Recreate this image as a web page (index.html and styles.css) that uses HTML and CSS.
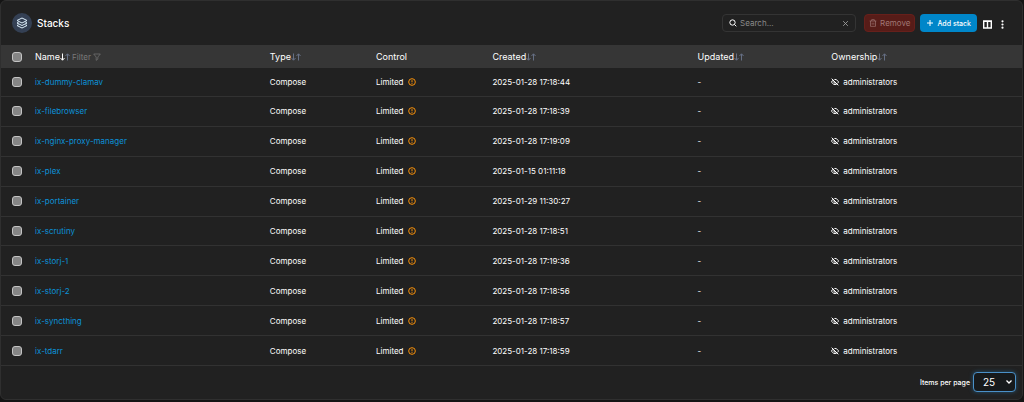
FILE: index.html
```html
<!DOCTYPE html>
<html lang="en">
<head>
  <meta charset="UTF-8" />
  <meta name="viewport" content="width=device-width, initial-scale=1.0" />
  <title>Stacks</title>
  <link rel="stylesheet" href="styles.css">
</head>
<body>
  <svg class="sprite" aria-hidden="true">
    <symbol id="sort" viewBox="0 0 20 16">
      <path class="down" d="M5 1v13M1 10l4 4.500L9 10" />
      <path d="M15 15V2M11 6l4-4.500L19 6" />
    </symbol>
    <symbol id="info" viewBox="0 0 24 24">
      <circle cx="12" cy="12" r="10" />
      <path d="M12 6.500v6.500M12 15.500v2.500" />
    </symbol>
    <symbol id="eye-off" viewBox="0 0 24 24">
      <path d="M9.900 4.500A10 10 0 0 1 12 4.300c6 0 9.500 5.500 10.500 7.700a16 16 0 0 1-3 4.200M6.500 6.300A15 15 0 0 0 1.500 12c1 2.200 4.500 7.700 10.500 7.700 2 0 3.800-.6 5.300-1.600M9.500 9.500a3.500 3.500 0 0 0 5 5M2 2l20 20" />
    </symbol>
  </svg>

  <main class="card">
    <header class="toolbar">
      <span class="badge">
        <svg viewBox="0 0 24 24"><path d="M12 2L2 7l10 5 10-5zM5 10.500L2 12l10 5 10-5-3-1.500M5 15.500L2 17l10 5 10-5-3-1.500" /></svg>
      </span>
      <h1>Stacks</h1>
      <div class="search">
        <svg viewBox="0 0 24 24"><circle cx="10.500" cy="10.500" r="8" /><path d="M16.500 16.500L22 22" /></svg>
        <input type="text" placeholder="Search..." aria-label="Search">
        <button type="button" class="clear" aria-label="Clear search">
          <svg viewBox="0 0 24 24"><path d="M4 4l16 16M20 4L4 20" /></svg>
        </button>
      </div>
      <button type="button" class="btn remove" disabled>
        <svg viewBox="0 0 24 24"><path d="M2 6h20M8 6V2h8v4M4.500 6v16h15V6M9.500 11v6M14.500 11v6" /></svg>
        Remove
      </button>
      <button type="button" class="btn add">
        <svg viewBox="0 0 24 24"><path d="M12 3v18M3 12h18" /></svg>
        Add stack
      </button>
      <button type="button" class="tool" aria-label="Columns">
        <svg viewBox="0 0 9 9"><path d="M.7 1h7.600v7H.7zM4.500 1v7M.7 1.200h7.600" /></svg>
      </button>
      <button type="button" class="tool dots" aria-label="Table settings">
        <svg viewBox="0 0 9 9"><circle cx="4.500" cy="1.300" r="1.100" /><circle cx="4.500" cy="4.500" r="1.100" /><circle cx="4.500" cy="7.700" r="1.100" /></svg>
      </button>
    </header>

    <table>
      <colgroup>
        <col class="col-check"><col class="col-name"><col class="col-type"><col class="col-control"><col class="col-created"><col class="col-updated"><col>
      </colgroup>
      <thead>
        <tr>
          <th><input type="checkbox" aria-label="Select all"></th>
          <th>Name<svg class="sort asc"><use href="#sort" /></svg><button type="button" class="filter">Filter <svg viewBox="0 0 24 24"><path d="M2 3h20l-7.500 9v6.500L9.500 22V12z" /></svg></button></th>
          <th>Type<svg class="sort"><use href="#sort" /></svg></th>
          <th>Control</th>
          <th>Created<svg class="sort"><use href="#sort" /></svg></th>
          <th>Updated<svg class="sort"><use href="#sort" /></svg></th>
          <th>Ownership<svg class="sort"><use href="#sort" /></svg></th>
        </tr>
      </thead>
      <tbody>
        <tr>
          <td><input type="checkbox" aria-label="Select ix-dummy-clamav"></td>
          <td><a href="#">ix-dummy-clamav</a></td>
          <td>Compose</td>
          <td>Limited <svg class="info"><use href="#info" /></svg></td>
          <td>2025-01-28 17:18:44</td>
          <td>-</td>
          <td><svg class="eye"><use href="#eye-off" /></svg>administrators</td>
        </tr>
        <tr>
          <td><input type="checkbox" aria-label="Select ix-filebrowser"></td>
          <td><a href="#">ix-filebrowser</a></td>
          <td>Compose</td>
          <td>Limited <svg class="info"><use href="#info" /></svg></td>
          <td>2025-01-28 17:18:39</td>
          <td>-</td>
          <td><svg class="eye"><use href="#eye-off" /></svg>administrators</td>
        </tr>
        <tr>
          <td><input type="checkbox" aria-label="Select ix-nginx-proxy-manager"></td>
          <td><a href="#">ix-nginx-proxy-manager</a></td>
          <td>Compose</td>
          <td>Limited <svg class="info"><use href="#info" /></svg></td>
          <td>2025-01-28 17:19:09</td>
          <td>-</td>
          <td><svg class="eye"><use href="#eye-off" /></svg>administrators</td>
        </tr>
        <tr>
          <td><input type="checkbox" aria-label="Select ix-plex"></td>
          <td><a href="#">ix-plex</a></td>
          <td>Compose</td>
          <td>Limited <svg class="info"><use href="#info" /></svg></td>
          <td>2025-01-15 01:11:18</td>
          <td>-</td>
          <td><svg class="eye"><use href="#eye-off" /></svg>administrators</td>
        </tr>
        <tr>
          <td><input type="checkbox" aria-label="Select ix-portainer"></td>
          <td><a href="#">ix-portainer</a></td>
          <td>Compose</td>
          <td>Limited <svg class="info"><use href="#info" /></svg></td>
          <td>2025-01-29 11:30:27</td>
          <td>-</td>
          <td><svg class="eye"><use href="#eye-off" /></svg>administrators</td>
        </tr>
        <tr>
          <td><input type="checkbox" aria-label="Select ix-scrutiny"></td>
          <td><a href="#">ix-scrutiny</a></td>
          <td>Compose</td>
          <td>Limited <svg class="info"><use href="#info" /></svg></td>
          <td>2025-01-28 17:18:51</td>
          <td>-</td>
          <td><svg class="eye"><use href="#eye-off" /></svg>administrators</td>
        </tr>
        <tr>
          <td><input type="checkbox" aria-label="Select ix-storj-1"></td>
          <td><a href="#">ix-storj-1</a></td>
          <td>Compose</td>
          <td>Limited <svg class="info"><use href="#info" /></svg></td>
          <td>2025-01-28 17:19:36</td>
          <td>-</td>
          <td><svg class="eye"><use href="#eye-off" /></svg>administrators</td>
        </tr>
        <tr>
          <td><input type="checkbox" aria-label="Select ix-storj-2"></td>
          <td><a href="#">ix-storj-2</a></td>
          <td>Compose</td>
          <td>Limited <svg class="info"><use href="#info" /></svg></td>
          <td>2025-01-28 17:18:56</td>
          <td>-</td>
          <td><svg class="eye"><use href="#eye-off" /></svg>administrators</td>
        </tr>
        <tr>
          <td><input type="checkbox" aria-label="Select ix-syncthing"></td>
          <td><a href="#">ix-syncthing</a></td>
          <td>Compose</td>
          <td>Limited <svg class="info"><use href="#info" /></svg></td>
          <td>2025-01-28 17:18:57</td>
          <td>-</td>
          <td><svg class="eye"><use href="#eye-off" /></svg>administrators</td>
        </tr>
        <tr>
          <td><input type="checkbox" aria-label="Select ix-tdarr"></td>
          <td><a href="#">ix-tdarr</a></td>
          <td>Compose</td>
          <td>Limited <svg class="info"><use href="#info" /></svg></td>
          <td>2025-01-28 17:18:59</td>
          <td>-</td>
          <td><svg class="eye"><use href="#eye-off" /></svg>administrators</td>
        </tr>
      </tbody>
    </table>

    <footer class="pager">
      <label for="page-size">Items per page</label>
      <select id="page-size">
        <option>10</option>
        <option selected>25</option>
        <option>50</option>
        <option>100</option>
      </select>
    </footer>
  </main>
</body>
</html>
```
FILE: styles.css
```css
* {
  box-sizing: border-box;
}
body {
  margin: 0;
  background: #141414;
  color: #fff;
  font-family: Inter, sans-serif;
  font-size: 8px;
}
svg {
  fill: none;
  stroke: currentColor;
  stroke-width: 2;
  flex-shrink: 0;
}
.sprite {
  display: none;
}
button, input, select {
  font: inherit;
  color: inherit;
}
button {
  padding: 0;
  border: 0;
  background: none;
  cursor: pointer;
}
.card {
  margin-right: 1px;
  background: #212121;
  border: 1px solid #2f2f2f;
  border-radius: 6px;
}
.toolbar {
  display: flex;
  align-items: center;
  height: 44px;
  padding: 0 15px 0 11px;
}
.badge {
  display: flex;
  align-items: center;
  justify-content: center;
  width: 20px;
  height: 20px;
  border-radius: 50%;
  background: #344054;
  color: #e0f2fe;
}
.badge svg {
  width: 12px;
  height: 12px;
}
h1 {
  margin: 0 auto 0 5px;
  font-size: 10px;
  font-weight: 500;
}
.search {
  display: flex;
  align-items: center;
  width: 134px;
  height: 18px;
  padding: 0 6px;
  border: 1px solid #343434;
  border-radius: 4px;
}
.search svg {
  width: 8px;
  height: 8px;
  stroke-width: 3;
}
.search input {
  flex: 1;
  min-width: 0;
  padding: 0 3px;
  border: 0;
  outline: 0;
  background: none;
  font-size: 8px;
}
.search input::placeholder {
  color: #8a8a8a;
}
.search .clear {
  display: flex;
  color: #a0a0a0;
}
.search .clear svg {
  width: 7px;
  height: 7px;
}
.btn {
  display: flex;
  align-items: center;
  gap: 3px;
  height: 18px;
  padding: 0 6px;
  border-radius: 4px;
}
.btn svg {
  width: 8px;
  height: 8px;
}
.remove {
  margin-left: 8px;
  padding: 0 4px;
  background: #571c18;
  border: 1px solid #66201b;
  color: #a07876;
}
.add {
  margin-left: 5px;
  background: #0086c9;
  font-size: 7px;
  font-weight: 500;
}
.add svg {
  stroke-width: 3;
}
.tool {
  display: flex;
  margin: 3px 0 0 6px;
}
.tool svg {
  width: 9px;
  height: 9px;
  stroke-width: 1.4;
}
.dots svg {
  fill: #fff;
  stroke: none;
}
table {
  width: 100%;
  height: 321px;
  table-layout: fixed;
  border-collapse: collapse;
}
.col-check {
  width: 34px;
}
.col-name {
  width: 23%;
}
.col-type {
  width: 10.4%;
}
.col-control {
  width: 11.4%;
}
.col-created {
  width: 20.1%;
}
.col-updated {
  width: 13.1%;
}
th, td {
  padding: 0;
  text-align: left;
  white-space: nowrap;
}
th {
  height: 23px;
  background: #363636;
  font-size: 9px;
  font-weight: 400;
}
td {
  border-bottom: 1px solid #323232;
}
th:first-child, td:first-child {
  padding-left: 11px;
}
td a {
  color: #0b91d8;
  text-decoration: none;
}
input[type="checkbox"] {
  appearance: none;
  display: block;
  width: 10px;
  height: 10px;
  margin: 0;
  border: 1px solid #c4c4c4;
  border-radius: 3px;
  background: #858585;
}
.sort {
  width: 10px;
  height: 8px;
  color: #667085;
  vertical-align: -1px;
}
.down {
  stroke: var(--down, currentColor);
}
.asc {
  --down: #fff;
}
.filter {
  margin-left: 2px;
  color: #7a7a7a;
  font-size: 8px;
}
.filter svg {
  width: 8px;
  height: 8px;
  vertical-align: -1px;
}
.info, .eye {
  width: 8px;
  height: 8px;
  vertical-align: -1px;
  stroke-width: 3;
}
.info {
  margin-left: 2px;
  color: #f79009;
}
.eye {
  margin-right: 4px;
}
.pager {
  display: flex;
  align-items: center;
  justify-content: flex-end;
  gap: 3px;
  padding: 6px 6px 7px;
}
.pager label {
  font-size: 7px;
  font-weight: 500;
}
.pager select {
  appearance: none;
  width: 43px;
  height: 20px;
  padding: 0 0 0 9px;
  border: 1px solid #4a90c8;
  border-radius: 4px;
  background: #171a1c url("data:image/svg+xml,%3Csvg xmlns='http://www.w3.org/2000/svg' viewBox='0 0 6 6'%3E%3Cpath d='M.5 1.500L3 4l2.500-2.500' fill='none' stroke='white' stroke-width='1.300'/%3E%3C/svg%3E") no-repeat right 3px center / 6px 6px;
  box-shadow: 0 0 4px #24506f;
  font-size: 10px;
}
```
